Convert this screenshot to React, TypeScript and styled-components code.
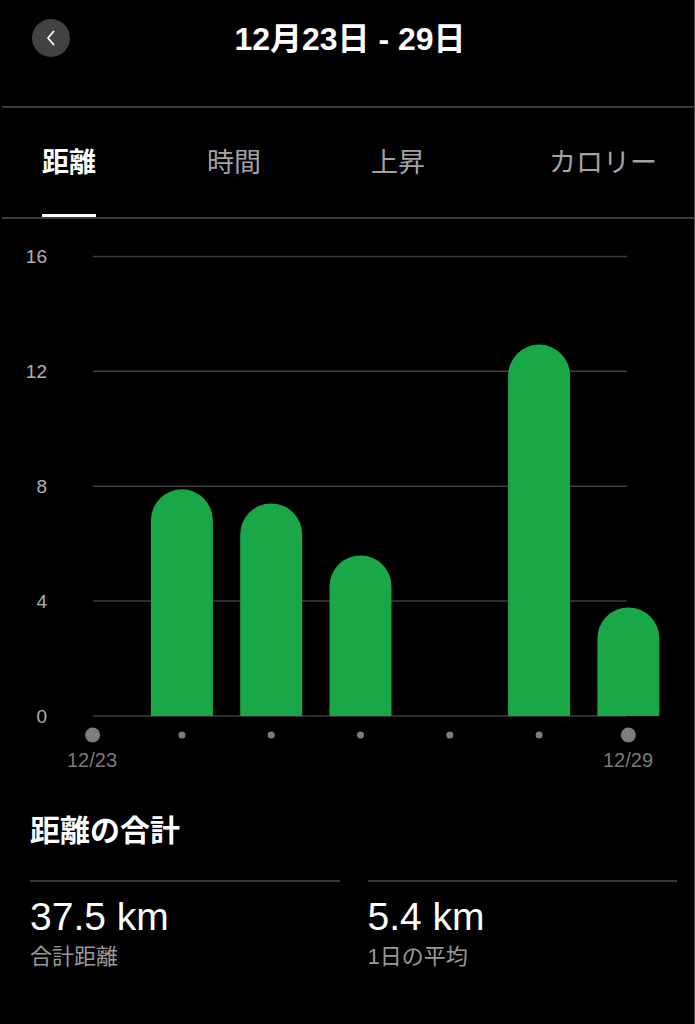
import React from "react";
import styled, { createGlobalStyle } from "styled-components";

const GlobalStyle = createGlobalStyle`
  html, body {
    margin: 0;
    padding: 0;
    background: #000;
  }
  * { box-sizing: border-box; }
`;

const FONT = `"Liberation Sans", "Noto Sans CJK JP", sans-serif`;

const Page = styled.div`
  width: 695px;
  min-height: 1024px;
  background: #000;
  color: #fff;
  font-family: ${FONT};
  border-right: 1px solid #4a4a4a;
  display: flex;
  flex-direction: column;
`;

const Header = styled.header`
  height: 106px;
  padding-top: 19px;
  display: grid;
  grid-template-columns: 1fr auto 1fr;
  align-items: start;
`;

const BackButton = styled.button`
  justify-self: start;
  margin-left: 32px;
  width: 38px;
  height: 38px;
  border-radius: 50%;
  border: none;
  padding: 0;
  background: #424242;
  display: flex;
  align-items: center;
  justify-content: center;
  cursor: pointer;
`;

const Title = styled.h1`
  margin: 0 0 0 6px;
  font-size: 32px;
  line-height: 40px;
  font-weight: 700;
  letter-spacing: 0;
  white-space: nowrap;
`;

const Divider = styled.div`
  height: 2px;
  margin-left: 2px;
  background: #3b3b3b;
`;

const TabBar = styled.nav`
  height: 109px;
  padding-left: 42px;
  display: grid;
  grid-template-columns: 165px 164px 178px auto;
`;

const Tab = styled.div<{ $active?: boolean }>`
  justify-self: start;
  height: 109px;
  padding-top: 37px;
  display: flex;
  flex-direction: column;
  justify-content: space-between;
  font-size: 27px;
  line-height: 36px;
  font-weight: ${(p) => (p.$active ? 700 : 400)};
  color: ${(p) => (p.$active ? "#ffffff" : "#a3a3a3")};
  white-space: nowrap;
`;

const Indicator = styled.div<{ $active?: boolean }>`
  height: 3px;
  width: 100%;
  background: ${(p) => (p.$active ? "#ffffff" : "transparent")};
`;

const ChartSvg = styled.svg`
  display: block;
  width: 695px;
  height: 571px;
  font-family: ${FONT};
`;

const Summary = styled.section`
  padding: 23px 17px 0 30px;
  display: flex;
  flex-direction: column;
`;

const SummaryTitle = styled.h2`
  margin: 0 0 31px;
  font-size: 30px;
  line-height: 36px;
  font-weight: 700;
`;

const StatGrid = styled.div`
  display: grid;
  grid-template-columns: 1fr 1fr;
  column-gap: 28px;
`;

const Stat = styled.div`
  border-top: 2px solid #383838;
  padding-top: 13px;
  display: flex;
  flex-direction: column;
`;

const StatValue = styled.div`
  font-size: 39px;
  line-height: 44px;
  font-weight: 400;
  color: #fff;
`;

const StatLabel = styled.div`
  margin-top: 4px;
  font-size: 22px;
  line-height: 28px;
  color: #9a9a9a;
`;

const BASE = 497;
const PER_KM = 114.9 / 4;
const X0 = 92.6;
const STEP = 89.3;
const BAR_W = 62;
const values = [0, 7.89, 7.4, 5.59, 0, 12.93, 3.78];
const ticks = [0, 4, 8, 12, 16];

function barPath(cx: number, v: number) {
  const x0 = cx - BAR_W / 2;
  const x1 = cx + BAR_W / 2;
  const r = BAR_W / 2;
  const top = BASE - v * PER_KM;
  return `M${x0},${BASE} V${top + r} A${r},${r} 0 0 1 ${x1},${top + r} V${BASE} Z`;
}

function Chart() {
  return (
    <ChartSvg viewBox="0 0 695 571">
      {ticks.map((t) => {
        const y = BASE - t * PER_KM;
        return (
          <g key={t}>
            <line x1={93} x2={627} y1={y} y2={y} stroke="#3d3d3d" strokeWidth={1.5} />
            <text
              x={47}
              y={y}
              textAnchor="end"
              dominantBaseline="central"
              fontSize={19}
              fill="#b0b0b0"
            >
              {t}
            </text>
          </g>
        );
      })}
      {values.map((v, i) =>
        v > 0 ? <path key={`b${i}`} d={barPath(X0 + STEP * i, v)} fill="#19a748" /> : null
      )}
      {values.map((_, i) => {
        const big = i === 0 || i === values.length - 1;
        return (
          <circle
            key={`d${i}`}
            cx={X0 + STEP * i}
            cy={516}
            r={big ? 7.5 : 3.5}
            fill="#7d7d7d"
          />
        );
      })}
      <text x={92} y={541} textAnchor="middle" dominantBaseline="central" fontSize={20} fill="#7a7a7a">
        12/23
      </text>
      <text x={628} y={541} textAnchor="middle" dominantBaseline="central" fontSize={20} fill="#7a7a7a">
        12/29
      </text>
    </ChartSvg>
  );
}

const tabs = ["距離", "時間", "上昇", "カロリー"];

export default function App() {
  return (
    <>
      <GlobalStyle />
      <Page>
        <Header>
          <BackButton aria-label="戻る">
            <svg width="14" height="18" viewBox="0 0 14 18" fill="none">
              <path d="M9.5 2.5 L4 9 L9.5 15.5" stroke="#fff" strokeWidth="1.8" strokeLinecap="round" strokeLinejoin="round" />
            </svg>
          </BackButton>
          <Title>12月23日 - 29日</Title>
          <span />
        </Header>
        <Divider />
        <TabBar>
          {tabs.map((t, i) => (
            <Tab key={t} $active={i === 0}>
              <span>{t}</span>
              <Indicator $active={i === 0} />
            </Tab>
          ))}
        </TabBar>
        <Divider />
        <Chart />
        <Summary>
          <SummaryTitle>距離の合計</SummaryTitle>
          <StatGrid>
            <Stat>
              <StatValue>37.5 km</StatValue>
              <StatLabel>合計距離</StatLabel>
            </Stat>
            <Stat>
              <StatValue>5.4 km</StatValue>
              <StatLabel>1日の平均</StatLabel>
            </Stat>
          </StatGrid>
        </Summary>
      </Page>
    </>
  );
}
